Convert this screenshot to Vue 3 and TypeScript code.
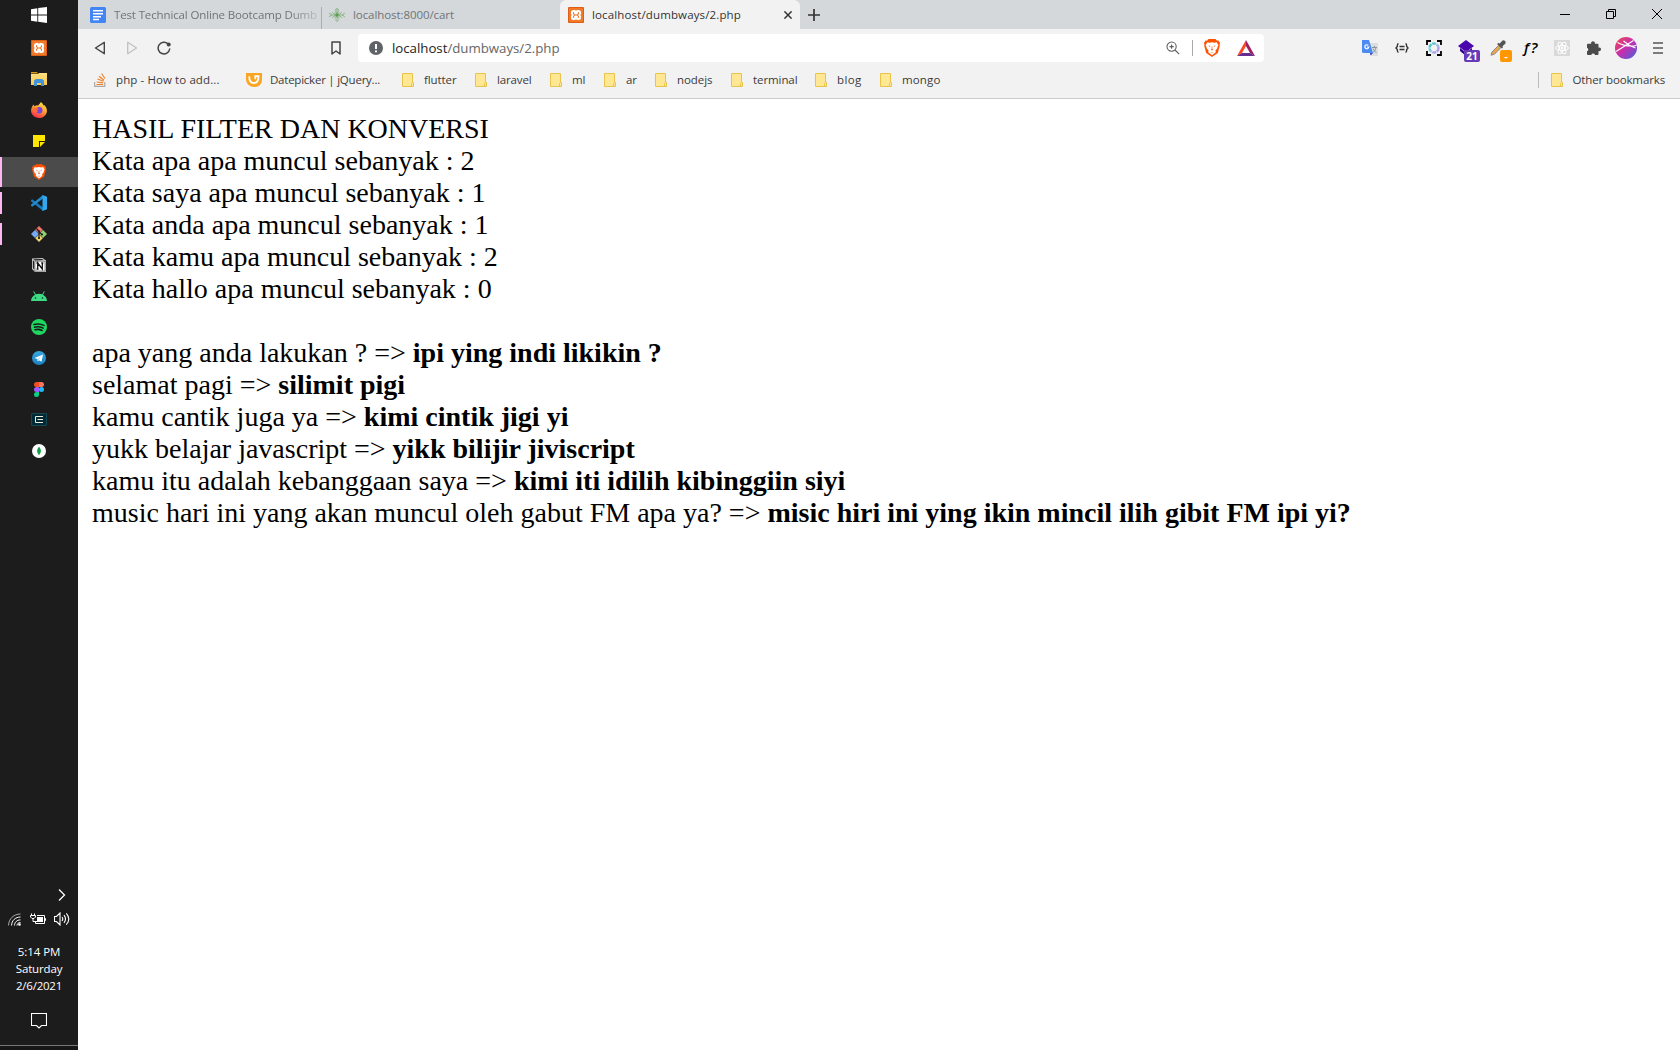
<script setup lang="ts">
import type { Directive } from 'vue'

interface Bookmark { label: string; kind: 'so' | 'jq' | 'folder'; slot: number; width: number }
interface Conversion { source: string; result: string }

// Adjusts letter spacing so that a label takes the given width.
const vFit: Directive<HTMLElement, number> = {
  mounted(el, binding) {
    const count = (el.textContent ?? '').length
    el.style.letterSpacing = `${(binding.value - el.getBoundingClientRect().width) / count}px`
  },
}

const bookmarks: Bookmark[] = [
  { label: 'php - How to add...', kind: 'so', slot: 152, width: 103.5 },
  { label: 'Datepicker | jQuery...', kind: 'jq', slot: 156, width: 110 },
  { label: 'flutter', kind: 'folder', slot: 73, width: 32.5 },
  { label: 'laravel', kind: 'folder', slot: 75, width: 34.5 },
  { label: 'ml', kind: 'folder', slot: 54, width: 13.5 },
  { label: 'ar', kind: 'folder', slot: 51, width: 11 },
  { label: 'nodejs', kind: 'folder', slot: 76, width: 35.5 },
  { label: 'terminal', kind: 'folder', slot: 84, width: 44.5 },
  { label: 'blog', kind: 'folder', slot: 65, width: 24.5 },
  { label: 'mongo', kind: 'folder', slot: 80, width: 38.5 },
]

const counts: [string, number][] = [['apa', 2], ['saya', 1], ['anda', 1], ['kamu', 2], ['hallo', 0]]

const conversions: Conversion[] = [
  { source: 'apa yang anda lakukan ?', result: 'ipi ying indi likikin ?' },
  { source: 'selamat pagi', result: 'silimit pigi' },
  { source: 'kamu cantik juga ya', result: 'kimi cintik jigi yi' },
  { source: 'yukk belajar javascript', result: 'yikk bilijir jiviscript' },
  { source: 'kamu itu adalah kebanggaan saya', result: 'kimi iti idilih kibinggiin siyi' },
  { source: 'music hari ini yang akan muncul oleh gabut FM apa ya?', result: 'misic hiri ini ying ikin mincil ilih gibit FM ipi yi?' },
]
</script>

<template>
  <div class="desktop">
    <svg class="defs" width="0" height="0">
      <defs>
        <linearGradient id="fx" x1="0.8" y1="0" x2="0.3" y2="1"><stop offset="0" stop-color="#ffe64a" /><stop offset=".5" stop-color="#ff9a30" /><stop offset="1" stop-color="#f5254e" /></linearGradient>
        <linearGradient id="fold" x1="0" y1="0" x2="0" y2="1"><stop offset="0" stop-color="#ffdf80" /><stop offset="1" stop-color="#fbc94b" /></linearGradient>
        <linearGradient id="tg" x1="0" y1="0" x2="0" y2="1"><stop offset="0" stop-color="#35a9e0" /><stop offset="1" stop-color="#1b80c0" /></linearGradient>
        <linearGradient id="av" x1="0" y1="0" x2="1" y2="1"><stop offset="0" stop-color="#f0484f" /><stop offset=".5" stop-color="#c52fae" /><stop offset="1" stop-color="#3e63e2" /></linearGradient>
        <linearGradient id="cap" x1="0" y1="0" x2="1" y2="1"><stop offset="0" stop-color="#3cc5b5" /><stop offset=".5" stop-color="#8fc5e8" /><stop offset="1" stop-color="#c88ae8" /></linearGradient>
        <symbol id="xampp" viewBox="0 0 16 16">
          <rect width="16" height="16" rx="1" fill="#db5f16" /><rect x="1" y="1" width="14" height="14" rx="1" fill="#f17a2b" />
          <path d="M5.500 3h1A1.500 1.500 0 0 1 8 4a1.500 1.500 0 0 1 1.500-1h1A2.500 2.500 0 0 1 13 5.500v1A1.500 1.500 0 0 1 12 8a1.500 1.500 0 0 1 1 1.500v1A2.500 2.500 0 0 1 10.500 13h-1A1.500 1.500 0 0 1 8 12a1.500 1.500 0 0 1-1.500 1h-1A2.500 2.500 0 0 1 3 10.500v-1A1.500 1.500 0 0 1 4 8a1.500 1.500 0 0 1-1-1.500v-1A2.500 2.500 0 0 1 5.500 3z" fill="#fff" />
          <path d="M5.500 5.300v1.200L6.700 8l-1.200 1.500v1.200M10.500 5.300v1.200L9.300 8l1.200 1.500v1.200M6.700 8h2.600" fill="none" stroke="#ed7428" stroke-width="1.100" />
        </symbol>
        <symbol id="lion" viewBox="0 0 16 18">
          <path d="M4.500 0h7l1.500 1.700 1.500-.2L16 4l-.5 1.500.3 1.200-2 7.300L8 18l-5.800-4-2-7.300.3-1.200L0 4l1.500-2.500 1.500.2z" fill="#ff5000" />
          <path d="M3.200 3.300 5.500 3.800 8 3.300l2.500.5 2.300-.5 1.600 3.100-1 1.700.2.900-2.100 2.500.3 1.800L8 16.300l-3.800-3 .3-1.800L2.400 9l.2-.9-1-1.700z" fill="#fff" />
          <path d="m4.300 6.500 2.200.5-.6.900zM11.700 6.500 9.500 7l.6.900zM7.600 7.500h.8v2.300l.9.900L8 11.500l-1.300-.8.9-.9zM6.300 13l1.700.5 1.700-.5L8 14.300z" fill="#fb6a38" />
        </symbol>
        <symbol id="folder" viewBox="0 0 12 14">
          <path d="M.5.5h10v9h1v4H.5z" fill="#ffe793" stroke="#e9c44b" /><path d="M9.500 13.500v-3l1-1" fill="none" stroke="#e9c44b" />
        </symbol>
      </defs>
    </svg>

    <aside class="taskbar">
      <div class="start">
        <svg width="16" height="16" viewBox="0 0 16 16"><path d="M0 2.200 6.300 1.300v6.200H0zM7.200 1.100 16 0v7.500H7.200zM0 8.500h6.300v6.200L0 13.800zM7.200 8.500H16V16l-8.800-1.200z" fill="#fff" /></svg>
      </div>
      <div class="app"><svg width="16" height="16"><use href="#xampp" /></svg></div>
      <div class="app"><svg width="16" height="14" viewBox="0 0 16 14"><path d="M0 0h6l1 1.500H0z" fill="#d89b16" /><path d="M0 2h7l1-1h8v12H0z" fill="url(#fold)" /><path d="M3 14V8.500L5 7h6l2 1.500V14h-3v-3H6v3z" fill="#3f94dc" /></svg></div>
      <div class="app"><svg width="16" height="16" viewBox="0 0 16 16"><path d="M2.300 2.400 3.500 4.200l2-.9 1.700.2C8.200 2 9 1.700 9.900 0c1.700 1.200 2.300 2.500 2.500 3.400l.8-.5c2.200 2 3.200 4.700 2.600 7.300C14.800 13.700 11.800 16 8 16S.7 13.500.1 9.600C-.2 7 .7 5.100 2.300 2.400z" fill="url(#fx)" /><circle cx="8.200" cy="8.200" r="3.200" fill="#7542e5" /><path d="M2 6c2-.5 4-.6 6 1L6 8.200l1 2C4.500 10.500 3 8.500 2 6z" fill="#ff6b32" /></svg></div>
      <div class="app"><svg width="12" height="12" viewBox="0 0 12 12"><path d="M0 0h12v6H6v6H0z" fill="#ffe600" /><path d="M7 7h5l-5 5z" fill="#ffe600" /></svg></div>
      <div class="app active"><svg width="14" height="16"><use href="#lion" /></svg></div>
      <div class="app running"><svg width="16" height="16" viewBox="0 0 16 16"><path d="M0 5.300 1.200 4.200 12 12.600V16L0 6.200z" fill="#167bbf" /><path d="M0 10.700 1.200 11.800 12 3.400V0L0 9.800z" fill="#208bd1" /><path d="M11.500 0 16 1.800v12.400L11.500 16z" fill="#32a8ef" /></svg></div>
      <div class="app running">
        <svg width="16" height="16" viewBox="0 0 16 16"><path d="m8 0 3.800 3.800L8 7.500 4.200 3.800z" fill="#f07570" /><path d="m4 4 4 4-4 4-4-4z" fill="#76a9ef" /><path d="m12 4 4 4-4 4-4-4z" fill="#93d071" /><path d="m8 8.500 3.800 3.700L8 16l-3.800-3.800z" fill="#eed36b" /><path d="m5.500 2.500 2.500 3v7M8 6l3 2.500" stroke="#222" stroke-width="1.200" fill="none" /><circle cx="8" cy="5.300" r="1.100" fill="#222" /><circle cx="11" cy="8.500" r="1.100" fill="#222" /><circle cx="8" cy="12" r="1.100" fill="#222" /></svg>
      </div>
      <div class="app"><svg width="14" height="14" viewBox="0 0 14 14"><path d="M0 .5 10.500 0 14 2.500V14H3L0 11z" fill="#c8c8c8" /><path d="M1.200 1.200 10 .9l1.600 1.200L3 2.500zM.9 2.200l1.300 1.300v8L.9 10z" fill="#222" /><path d="M3 3.300h10v9.700H3z" fill="#fff" stroke="#333" stroke-width=".5" /><path d="M5.700 11V5l4.600 6V5M4.500 5h2M9.300 5h2M4.500 11.200h2" stroke="#111" stroke-width="1.300" fill="none" /></svg></div>
      <div class="app"><svg width="16" height="10" viewBox="0 0 16 10"><path d="M0 10a8 8 0 0 1 4-6.300L2.300.5l.6-.4 1.900 3.200a8.500 8.500 0 0 1 6.400 0L13.100.1l.6.4L12 3.700A8 8 0 0 1 16 10z" fill="#3ddc84" /><circle cx="4.500" cy="7" r=".8" fill="#1c1c1c" /><circle cx="11.500" cy="7" r=".8" fill="#1c1c1c" /></svg></div>
      <div class="app"><svg width="16" height="16" viewBox="0 0 16 16"><circle cx="8" cy="8" r="8" fill="#1ed760" /><path d="M3 5.500c3.500-1 7-.7 10 .9M3.500 8.200c3-.8 6-.5 8.700.9M4 10.700c2.600-.6 5-.4 7.200.8" stroke="#191919" stroke-width="1.500" stroke-linecap="round" fill="none" /></svg></div>
      <div class="app"><svg width="14" height="14" viewBox="0 0 14 14"><circle cx="7" cy="7" r="7" fill="url(#tg)" /><path d="m2.500 7 8.500-3.500-1.500 7.300L7 9.200 5.800 10.500 5.400 8z" fill="#fff" /><path d="m5.500 8 4-3.200L6.500 9l-.7 1.400z" fill="#bcd9ea" /></svg></div>
      <div class="app"><svg width="10" height="15" viewBox="0 0 10 15"><path d="M2.500 0H5v5H2.500a2.500 2.500 0 0 1 0-5z" fill="#f24e1e" /><path d="M5 0h2.500a2.500 2.500 0 0 1 0 5H5z" fill="#ff7262" /><path d="M2.500 5H5v5H2.500a2.500 2.500 0 0 1 0-5z" fill="#a259ff" /><circle cx="7.500" cy="7.500" r="2.500" fill="#1abcfe" /><path d="M2.500 10H5v2.500A2.500 2.500 0 1 1 2.500 10z" fill="#0acf83" /></svg></div>
      <div class="app cmder"><svg width="16" height="13" viewBox="0 0 16 13"><rect x=".5" y=".5" width="15" height="12" rx=".5" fill="#002b36" stroke="#174854" /><path d="M12 3.500H4.500v6H12M6.500 6.500H12" stroke="#eee8d5" stroke-width="1" fill="none" /></svg></div>
      <div class="app"><svg width="14" height="14" viewBox="0 0 14 14"><circle cx="7" cy="7" r="7" fill="#fff" /><path d="M7 3c2.700 2.500 2.500 5.500 0 7.700C4.500 8.500 4.300 5.500 7 3z" fill="#13aa52" /><path d="M7 3v8" stroke="#0b8b43" stroke-width=".7" /></svg></div>

      <div class="tray">
        <div class="more"><svg width="8" height="12" viewBox="0 0 8 12"><path d="m1 .5 5.500 5.500L1 11.500" fill="none" stroke="#fff" stroke-width="1.300" /></svg></div>
        <div class="status">
          <svg width="13" height="13" viewBox="0 0 13 13"><g fill="none" stroke="#fff"><path d="M.6 12.500C.6 5.800 5.800 1 12.500 1" stroke="#aaa" /><path d="M3.600 12.500c0-5 3.900-8.500 8.900-8.500M6.500 12.500c0-3.300 2.600-5.600 6-5.600" /><path d="M9 12.500c.2-2 1.600-3 3.500-3" /></g><circle cx="11.500" cy="11.500" r="1.300" fill="#fff" /></svg>
          <svg width="16" height="12" viewBox="0 0 16 12"><path d="M7 2.500h7.500v8h-9V9M14.500 5.500h1v2h-1" fill="none" stroke="#fff" /><path d="M7 4h6v5H4.500V8H7z" fill="#fff" /><path d="M.5 2.500h5V4L4 5.500H2L.5 4zM1.500.5v2M4.500.5v2M3 5v3.500h2" stroke="#fff" fill="none" /></svg>
          <svg width="16" height="14" viewBox="0 0 16 14"><path d="M.5 4.500h2L6 1v12L2.500 9.500h-2zM8 5q1.500 2 0 4M10 3.200q3 3.800 0 7.600M12.300 1.300q5 5.700 0 11.400" fill="none" stroke="#fff" stroke-width="1.100" /></svg>
        </div>
        <div class="clock">
          <span v-fit="42.500">5:14 PM</span><span v-fit="46.500">Saturday</span><span v-fit="46">2/6/2021</span>
        </div>
        <svg class="notice" width="16" height="16" viewBox="0 0 16 16"><path d="M.5.5h15v12h-5L8 15l-2.500-2.500h-5z" fill="none" stroke="#fff" stroke-width="1.100" /></svg>
        <div class="peek"></div>
      </div>
    </aside>

    <div class="browser">
      <header class="tabs">
        <div class="tab first">
          <svg width="16" height="16" viewBox="0 0 16 16"><rect width="16" height="16" rx="1.500" fill="#4285f4" /><path d="M3 3.700h10M3 6.700h10M3 9.700h8M3 12.500h6" stroke="#fff" stroke-width="1.500" /></svg>
          <span class="title" v-fit="203">Test Technical Online Bootcamp Dumb</span>
        </div>
        <div class="tab second">
          <svg width="16" height="16" viewBox="0 0 16 16"><g fill="none" stroke="#83b27b" stroke-width=".8"><path d="M8 1v14M1 8h14M3 5l3 3-3 3M13 5l-3 3 3 3M0 6l3 2-3 2M16 6l-3 2 3 2M5 6h6M5 10h6" /><circle cx="8" cy="3.500" r="1.700" /><circle cx="8" cy="12" r="2" stroke="#a3c09e" /></g><circle cx="8" cy="8" r="1.800" fill="#5c9c54" /></svg>
          <span v-fit="101">localhost:8000/cart</span>
        </div>
        <div class="tab current">
          <svg width="16" height="16"><use href="#xampp" /></svg>
          <span v-fit="149">localhost/dumbways/2.php</span>
          <svg class="close" width="8" height="8" viewBox="0 0 8 8"><path d="m.4.4 7.200 7.200m0-7.200L.4 7.600" stroke="#333" stroke-width="1.500" /></svg>
        </div>
        <svg class="plus" width="12" height="12" viewBox="0 0 12 12"><path d="M6 0v12M0 6h12" stroke="#333" stroke-width="1.700" /></svg>
        <div class="window-buttons">
          <svg width="10" height="10"><path d="M0 5.500h10" stroke="#000" /></svg>
          <svg width="10" height="10"><path d="M.5 2.500h7v7h-7zM2.500 2.500v-2h7v7h-2" fill="none" stroke="#000" /></svg>
          <svg width="10" height="10"><path d="m0 0 10 10M10 0 0 10" stroke="#000" /></svg>
        </div>
      </header>

      <div class="toolbar">
        <div class="nav">
          <i><svg width="12" height="14" viewBox="0 0 12 14"><path d="M10.300 1.300v11.400L1.500 7z" fill="none" stroke="#444" stroke-width="1.400" stroke-linejoin="round" /></svg></i>
          <i><svg width="12" height="14" viewBox="0 0 12 14"><path d="M1.700 1.300v11.400L10.500 7z" fill="none" stroke="#c1c1c1" stroke-width="1.300" stroke-linejoin="round" /></svg></i>
          <i><svg width="14" height="14" viewBox="0 0 14 14"><path d="M11 2.900A5.800 5.800 0 1 0 12.700 8" fill="none" stroke="#444" stroke-width="1.500" stroke-linecap="round" /><circle cx="11.700" cy="3.500" r="2" fill="#444" /></svg></i>
        </div>
        <i class="save"><svg width="10" height="14" viewBox="0 0 10 14"><path d="M1 1h8v12L5 10l-4 3z" fill="none" stroke="#444" stroke-width="1.500" stroke-linejoin="round" /></svg></i>
        <div class="address">
          <svg width="14" height="14" viewBox="0 0 14 14"><circle cx="7" cy="7" r="7" fill="#5f6368" /><path d="M6 3h2v5H6zM6 9.500h2v1.800H6z" fill="#fff" /></svg>
          <span class="url" v-fit="167.500"><b>localhost</b>/dumbways/2.php</span>
          <svg class="magnify" width="14" height="14" viewBox="0 0 14 14"><path d="M10.200 5.600a4.600 4.600 0 1 1-9.200 0 4.600 4.600 0 0 1 9.200 0zM9 9l4.200 4.200M3.500 5.600h4.200M5.600 3.500v4.200" fill="none" stroke="#5a5d60" stroke-width="1.100" /></svg>
          <div class="divider"></div>
          <svg class="shield" width="16" height="18"><use href="#lion" /></svg>
          <svg width="18" height="16" viewBox="0 0 18 16"><path d="M9 0 0 16l5-3 4-7z" fill="#ff4724" /><path d="m9 0 9 16-5-3-4-7z" fill="#9e1f63" /><path d="M0 16h18l-5-3H5z" fill="#662d91" /></svg>
        </div>
        <div class="extensions">
          <i><svg width="16" height="16" viewBox="0 0 16 16"><path d="M6 3h10v13H9z" fill="#dedede" /><path d="M0 0h7l4 13H1.500A1.500 1.500 0 0 1 0 11.500z" fill="#4c8bf5" /><path d="M8 13h3l-2.500 2.500z" fill="#3040c8" /><path d="M6.300 5.400A2 2 0 1 0 6.800 7H4.800" fill="none" stroke="#fff" stroke-width="1.200" /><path d="M10 7.500h5M12.500 6v1.500M14 7.500c-.5 3-2 4-3 5M11.200 8.700c.8 2 1.800 3 3.300 3.800" fill="none" stroke="#8299a3" /></svg></i>
          <i><svg width="14" height="10" viewBox="0 0 14 10"><path d="M3.500.7C2 .7 2.500 2 2.300 3.500L1 5l1.300 1.500C2.500 8 2 9.300 3.500 9.300M10.500.7C12 .7 11.500 2 11.700 3.500L13 5l-1.300 1.500c-.2 1.500.3 2.800-1.200 2.800M4.500 3.500h5M4.500 6.500h5" fill="none" stroke="#333" stroke-width="1.400" /></svg></i>
          <i><svg width="16" height="16" viewBox="0 0 16 16"><path d="M1 5V1h4M11 1h4v4M15 11v4h-4M5 15H1v-4" fill="none" stroke="#000" stroke-width="1.800" /><circle cx="8" cy="8" r="4.500" fill="none" stroke="url(#cap)" stroke-width="2.500" stroke-dasharray="4 .7" /></svg></i>
          <i><svg width="16" height="16" viewBox="0 0 16 16"><path d="m8 0 8 6-8 6-8-6z" fill="#4b05ad" /><path d="m2 8 6 4.500L14 8v3l-6 5-6-5z" fill="#33058d" /></svg><em class="badge count">21</em></i>
          <i><svg width="16" height="16" viewBox="0 0 16 16"><path d="M1 15.200 2 12l6.500-6.500 2.300 2.300-6.500 6.500z" fill="#e9a64c" stroke="#888" stroke-width="1" /><path d="m7 4 1.500-1 1.300.5L12 1c2-2 5 1 3 3l-2.500 2.300.4 1.200-1 1z" fill="#555" /></svg><em class="badge dash">-</em></i>
          <i class="fq">ƒ?</i>
          <i><svg width="16" height="16" viewBox="0 0 16 16"><rect width="16" height="16" fill="#d9d9d9" /><g fill="none" stroke="#fff"><ellipse cx="8" cy="8" rx="6.500" ry="2.500" /><ellipse cx="8" cy="8" rx="6.500" ry="2.500" transform="rotate(60 8 8)" /><ellipse cx="8" cy="8" rx="6.500" ry="2.500" transform="rotate(120 8 8)" /></g><circle cx="8" cy="8" r="1.300" fill="#fff" /></svg></i>
          <i><svg width="14" height="14" viewBox="0 0 14 14"><path d="M0 3.500A1 1 0 0 1 1 2.700h3.200a1.900 1.900 0 1 1 3.600 0H10.500a1 1 0 0 1 1 1v2.800a1.900 1.900 0 1 1 0 3.600V13a1 1 0 0 1-1 1H8a1.900 1.900 0 0 0-3.700 0H1a1 1 0 0 1-1-1v-2.700a1.900 1.900 0 0 0 0-3.600z" fill="#4b4b4b" /></svg></i>
          <i><svg width="22" height="22" viewBox="0 0 22 22"><circle cx="11" cy="11" r="11" fill="url(#av)" /><path d="M1 14.500 18.500 3.500M2.500 5.500Q11 10.500 21.500 8.500M8.500 4Q14 9 20.500 11" fill="none" stroke="#fff" stroke-width="1.100" /></svg></i>
          <i><svg width="10" height="12" viewBox="0 0 10 12"><path d="M0 1h10M0 6h10M0 11h10" stroke="#555" stroke-width="1.700" /></svg></i>
        </div>
      </div>

      <nav class="bookmarks">
        <a v-for="b in bookmarks" :key="b.label" :style="{ width: b.slot + 'px' }">
          <svg v-if="b.kind === 'so'" width="12" height="14" viewBox="0 0 12 14"><path d="M.6 9v4.400h10.200V9" fill="none" stroke="#aaa" stroke-width="1.200" /><path d="M2.500 11.500h6.500M2.700 9l6.400.9M3.500 6l6 2.200M5 3.200l5 4M7.500.5l3.500 5" stroke="#f48024" stroke-width="1.200" /></svg>
          <svg v-else-if="b.kind === 'jq'" width="16" height="14" viewBox="0 0 16 14"><path d="M0 0h16v7a7 7 0 0 1-7 7H8a8 8 0 0 1-8-7z" fill="#faa523" /><path d="M3.200 3.200c0 4.500 1.500 6.800 4.600 6.800s4.700-2.500 4.700-6.800H9.300v3" fill="none" stroke="#fff" stroke-width="1.800" /></svg>
          <svg v-else width="12" height="14"><use href="#folder" /></svg>
          <span v-fit="b.width" :class="{ near: b.kind === 'jq' }">{{ b.label }}</span>
        </a>
        <a class="other"><svg width="12" height="14"><use href="#folder" /></svg><span v-fit="92.500">Other bookmarks</span></a>
      </nav>

      <main class="page">
        HASIL FILTER DAN KONVERSI<br>
        <template v-for="[word, n] in counts" :key="word">Kata {{ word }} apa muncul sebanyak : {{ n }}<br></template>
        <br>
        <template v-for="c in conversions" :key="c.source">{{ c.source }} =&gt; <b>{{ c.result }}</b><br></template>
      </main>
    </div>
  </div>
</template>

<style>
body { margin: 0; overflow: hidden; }
</style>

<style scoped>
.desktop { display: flex; width: 1680px; height: 1050px; overflow: hidden; background: #fff; font: 11.500px/16px "Open Sans", "Noto Sans", sans-serif; color: #3b3b3b; }
.desktop * { box-sizing: border-box; }
.defs { position: absolute; }
svg { display: block; flex: none; }
i { font-style: normal; }
span { white-space: nowrap; }

.taskbar { display: flex; flex-direction: column; flex: none; width: 78px; background: #1c1c1c; color: #fff; }
.start { display: flex; justify-content: center; height: 33px; padding-top: 7px; }
.app { display: flex; flex: none; align-items: center; justify-content: center; height: 30px; margin-bottom: 1px; }
.running { background: linear-gradient(#ffb4f4, #ffb4f4) left center / 2px 22px no-repeat; }
.active { margin-left: 0; background: linear-gradient(90deg, #ffb4f4 2px, #4b4b4b 2px); }
.cmder { padding-bottom: 1px; }
.tray { display: flex; flex-direction: column; margin-top: auto; height: 165px; }
.more { display: flex; justify-content: flex-end; padding: 4px 12px 0 0; height: 27px; }
.status { display: flex; align-items: center; justify-content: space-between; height: 14px; padding: 0 8px; }
.clock { display: flex; flex-direction: column; align-items: center; margin-top: 17px; line-height: 17px; }
.notice { margin: 19px 0 0 31px; }
.peek { margin-top: auto; height: 5px; border-top: 1px solid #777; background: #171717; }

.browser { flex: 1; min-width: 0; }
.tabs { display: flex; height: 29px; background: #d4d8db; }
.tab { display: flex; align-items: center; height: 29px; gap: 8px; color: #707377; }
.first { width: 244px; padding-left: 12px; background: linear-gradient(#a9adb0, #a9adb0) right bottom / 1px 22px no-repeat; }
.second { width: 238px; padding-left: 7px; }
.current { width: 240px; padding: 0 8px; border-radius: 6px 6px 0 0; background: #f2f2f2; color: #333; }
.title { -webkit-mask-image: linear-gradient(90deg, #000 175px, rgba(0, 0, 0, .25) 203px); mask-image: linear-gradient(90deg, #000 175px, rgba(0, 0, 0, .25) 203px); }
.close { margin-left: auto; }
.plus { margin: 9px 0 0 8px; }
.window-buttons { display: flex; gap: 36px; margin: 9px 18px 0 auto; }

.toolbar { display: flex; align-items: center; height: 38px; background: #f2f2f2; padding-left: 6px; }
.nav, .extensions { display: flex; }
.nav i, .extensions i, .save { position: relative; display: flex; align-items: center; justify-content: center; width: 32px; height: 28px; }
.save { margin: 0 6px 0 140px; }
.address { display: flex; align-items: center; width: 906px; height: 28px; padding: 0 9px 0 11px; border-radius: 4px; background: #fff; }
.url { margin-left: 9px; font-size: 13.300px; color: #666; }
.url b { font-weight: 400; color: #222; }
.magnify { margin-left: auto; }
.divider { width: 1px; height: 16px; margin: 0 11px 0 12px; background: #aaa; }
.shield { margin-right: 17px; }
.extensions { margin-left: 90px; }
.extensions .badge { position: absolute; left: 14px; top: 16px; height: 12px; border-radius: 2px; font: 700 10px/13px "Open Sans", sans-serif; text-align: center; color: #fff; }
.extensions .count { width: 16px; background: #673ab7; }
.extensions .dash { left: 18px; width: 12px; background: #ff9800; }
.extensions .fq { padding-bottom: 3px; font: italic 600 15px/20px "Open Sans", sans-serif; color: #000; }

.bookmarks { display: flex; height: 32px; padding: 0 15px 0 16px; border-bottom: 1px solid #ccc; background: #f2f2f2; }
.bookmarks a { display: flex; flex: none; align-items: center; height: 26px; gap: 10px; }
.near { margin-left: -2px; }
.bookmarks .other { margin: 5px 0 0 auto; height: 16px; padding-left: 12px; border-left: 1px solid #bbb; }

.page { padding: 14px; font: 28px/32px "Liberation Serif", "Times New Roman", serif; color: #000; }
</style>
